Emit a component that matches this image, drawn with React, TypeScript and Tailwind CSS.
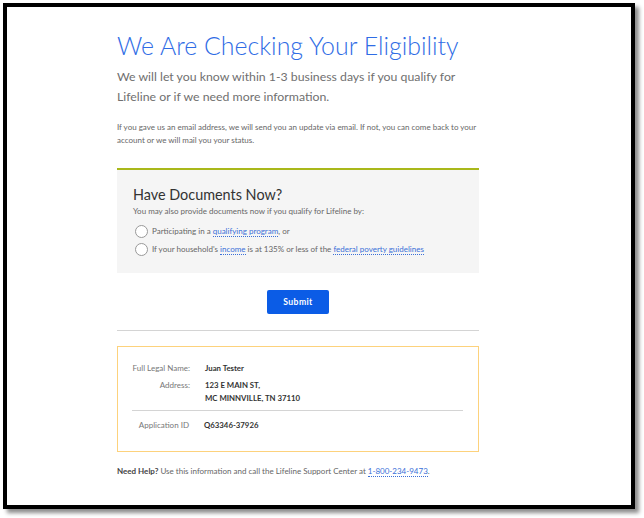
import React from 'react';

const Dotted: React.FC<{ children: React.ReactNode }> = ({ children }) => (
  <span className="text-[#3a6fd8] border-b border-dotted border-[#3a6fd8]">{children}</span>
);

const App: React.FC = () => {
  return (
    <div className="w-[644px] h-[518px] bg-white pt-[3px] pl-[3px] font-['Lato',sans-serif]">
      <div className="w-[632px] h-[506px] border-4 border-black bg-white shadow-[4px_4px_4px_rgba(0,0,0,0.45)]">
        <div className="w-[362px] ml-[110px] pt-[21px]">
          {/* Heading */}
          <h1 className="text-[24.9px] leading-[34px] font-light text-[#2f6ce5] whitespace-nowrap">
            We Are Checking Your Eligibility
          </h1>
          <p className="mt-[5px] text-[12.3px] leading-[20px] text-[#707070] pr-[10px]">
            We will let you know within 1-3 business days if you qualify for Lifeline or if we need more information.
          </p>
          <p className="mt-[14px] text-[8px] leading-[13px] text-[#666]">
            If you gave us an email address, we will send you an update via email. If not, you can come back to your account or we will mail you your status.
          </p>

          {/* Documents box */}
          <div className="mt-[21px] border-t-2 border-[#a9b81a] bg-[#f5f5f5] h-[105px] pt-[15px] px-[16px]">
            <h2 className="text-[14.4px] leading-[20px] text-[#333]">Have Documents Now?</h2>
            <p className="text-[8px] leading-[12px] text-[#666]">
              You may also provide documents now if you qualify for Lifeline by:
            </p>
            <div className="mt-[8px] flex flex-col gap-[5px] text-[8px] leading-[13px] text-[#666]">
              <div className="flex items-center gap-[4px] ml-[2px]">
                <span className="w-[13px] h-[13px] rounded-full border border-[#999] bg-white" />
                <span>
                  Participating in a <Dotted>qualifying program</Dotted>, or
                </span>
              </div>
              <div className="flex items-center gap-[4px] ml-[2px]">
                <span className="w-[13px] h-[13px] rounded-full border border-[#999] bg-white" />
                <span>
                  If your household's <Dotted>income</Dotted> is at 135% or less of the{' '}
                  <Dotted>federal poverty guidelines</Dotted>
                </span>
              </div>
            </div>
          </div>

          {/* Submit */}
          <div className="flex justify-center mt-[17px]">
            <button className="w-[62px] h-[24px] rounded-[2px] bg-[#0b5ce6] text-white text-[8.6px] font-bold tracking-[0.4px]">
              Submit
            </button>
          </div>

          <div className="mt-[16px] h-px bg-[#d4d4d4]" />

          {/* Applicant info */}
          <div className="mt-[15px] border border-[#fdd27c] h-[106px] pt-[15px] px-[14px] text-[8px]">
            <div className="grid grid-cols-[58px_1fr] gap-x-[15px] gap-y-[4px] leading-[13px]">
              <span className="text-right text-[#777] whitespace-nowrap">Full Legal Name:</span>
              <span className="font-bold text-[#333] text-[7.8px]">Juan Tester</span>
              <span className="text-right text-[#777]">Address:</span>
              <span className="font-bold text-[#333] text-[7.8px]">
                123 E MAIN ST,
                <br />
                MC MINNVILLE, TN 37110
              </span>
            </div>
            <div className="mt-[5px] h-px bg-[#d4d4d4] mr-[1px]" />
            <div className="mt-[8px] grid grid-cols-[57px_1fr] gap-x-[15px] leading-[13px]">
              <span className="text-right text-[#777] whitespace-nowrap">Application ID</span>
              <span className="font-bold text-[#333] text-[7.8px]">Q63346-37926</span>
            </div>
          </div>

          <p className="mt-[13px] text-[8px] leading-[13px] text-[#666]">
            <span className="font-bold text-[#444]">Need Help?</span> Use this information and call the Lifeline Support Center at{' '}
            <Dotted>1-800-234-9473</Dotted>.
          </p>
        </div>
      </div>
    </div>
  );
};

export default App;
